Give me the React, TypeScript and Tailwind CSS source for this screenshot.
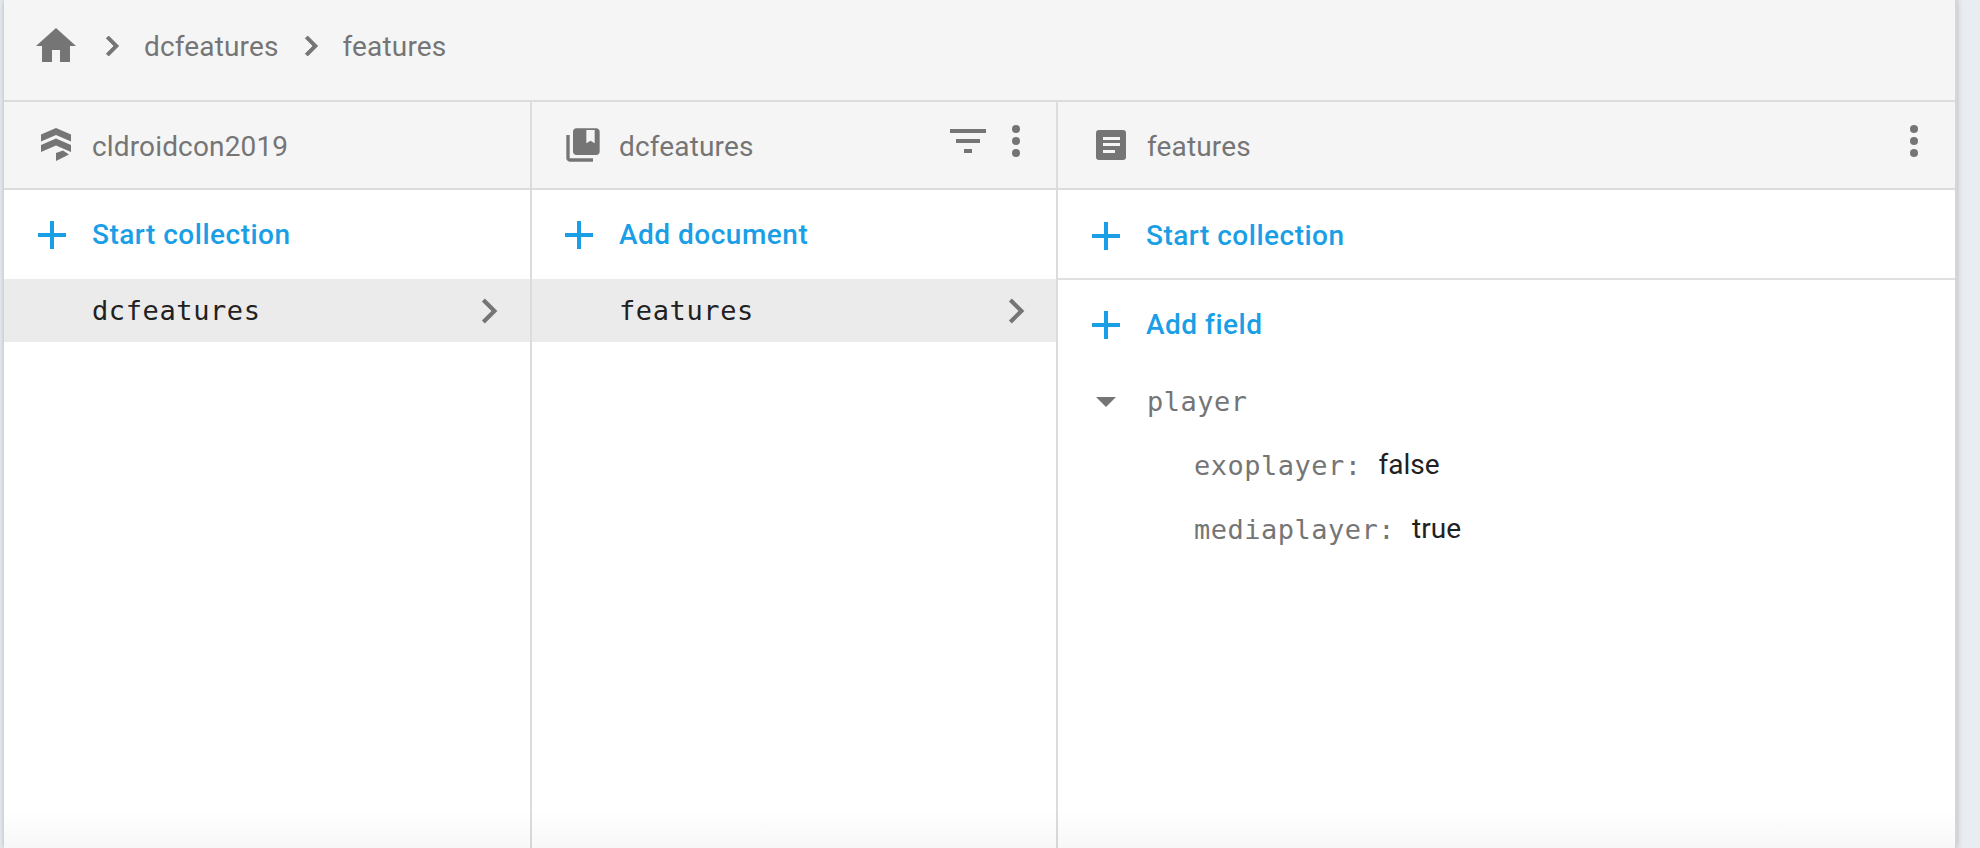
import type { ReactNode } from 'react'

const sans = 'font-["Roboto","Liberation_Sans",sans-serif]'
const mono = 'font-["DejaVu_Sans_Mono","Liberation_Mono",monospace]'

function Icon({ d, className }: { d: string; className: string }) {
  return (
    <svg viewBox="0 0 24 24" className={className} fill="currentColor">
      <path d={d} />
    </svg>
  )
}

const CHEVRON = 'M10 6L8.59 7.41 13.17 12l-4.58 4.59L10 18l6-6z'
const PLUS = 'M13 5h-2v6H5v2h6v6h2v-6h6v-2h-6z'

function HomeIcon() {
  return <Icon d="M10 20v-6h4v6h5v-8h3L12 3 2 12h3v8z" className="w-12 h-12 text-[#757575]" />
}

function DatabaseIcon() {
  return (
    <svg viewBox="0 0 30 34" className="w-[30px] h-[34px] text-[#757575] shrink-0" fill="currentColor">
      <path d="M15 0L30 6.5v7L15 7 0 13.5v-7z" />
      <path d="M15 10.5l15 6.5v7l-15-6.5L0 24v-7z" />
      <path d="M15 25l7-2.5 6 4L15 33z" />
    </svg>
  )
}

function CollectionIcon() {
  return (
    <svg viewBox="0 0 24 24" className="w-10 h-10 text-[#757575] shrink-0" fill="currentColor">
      <path d="M4 6H2v14c0 1.1.9 2 2 2h14v-2H4V6z" />
      <path d="M20 2H8c-1.1 0-2 .9-2 2v12c0 1.1.9 2 2 2h12c1.1 0 2-.9 2-2V4c0-1.1-.9-2-2-2zm-1 9l-2.5-1.5L14 11V3h5v8z" />
    </svg>
  )
}

function DocumentIcon() {
  return (
    <svg viewBox="0 0 30 30" className="w-[30px] h-[30px] text-[#757575] shrink-0" fill="currentColor">
      <path fillRule="evenodd" d="M3 0h24a3 3 0 0 1 3 3v24a3 3 0 0 1-3 3H3a3 3 0 0 1-3-3V3a3 3 0 0 1 3-3zm4 7v3h17V7zm0 6v3h17v-3zm0 7v3h12v-3z" />
    </svg>
  )
}

function FilterIcon() {
  return (
    <svg viewBox="0 0 36 24" className="w-9 h-6 text-[#757575]" fill="currentColor">
      <path d="M0 0h36v4H0zM6 10h24v4H6zM14 20h8v4h-8z" />
    </svg>
  )
}

function Dots() {
  return (
    <svg viewBox="0 0 8 32" className="w-2 h-8 text-[#757575]" fill="currentColor">
      <circle cx="4" cy="4" r="4" />
      <circle cx="4" cy="16" r="4" />
      <circle cx="4" cy="28" r="4" />
    </svg>
  )
}

function ColumnHeader({ icon, title, actions, iconBox }: { icon: ReactNode; title: string; actions?: ReactNode; iconBox: string }) {
  return (
    <div className="h-[88px] shrink-0 bg-[#f5f5f5] border-b-2 border-[#dcdcdc] flex items-center relative">
      <div className={iconBox}>{icon}</div>
      <span className="text-[28px] tracking-[0.15px] text-[#757575] leading-none pt-[4px]">{title}</span>
      {actions}
    </div>
  )
}

function ActionRow({ label, pad, border }: { label: string; pad: string; border?: boolean }) {
  return (
    <div className={`${border ? 'h-[90px] border-b-2 border-[#e0e0e0]' : 'h-[89px]'} shrink-0 flex items-center ${pad}`}>
      <Icon d={PLUS} className="w-12 h-12 text-[#1a9fe6] shrink-0" />
      <span className="text-[28px] font-medium tracking-[0.5px] text-[#1a9fe6] leading-none">{label}</span>
    </div>
  )
}

function SelectedRow({ label, pad }: { label: string; pad: string }) {
  return (
    <div className={`h-[63px] shrink-0 bg-[#ebebeb] flex items-center justify-between ${pad}`}>
      <span className={`${mono} text-[27px] tracking-[0.6px] text-[#212121] leading-none`}>{label}</span>
      <Icon d={CHEVRON} className="w-[50px] h-[50px] text-[#757575]" />
    </div>
  )
}

function Field({ name, value }: { name: string; value: string }) {
  return (
    <div className="h-[64px] pl-[136px] pt-[4px] flex items-center">
      <span className={`${mono} text-[27px] tracking-[0.5px] text-[#757575] leading-none mr-[17px]`}>{name}:</span>
      <span className="text-[28px] text-[#212121] leading-none">{value}</span>
    </div>
  )
}

export default function App() {
  return (
    <div className={`${sans} h-[848px] w-[1980px] overflow-hidden bg-[#e9edf1] pl-[4px]`}>
      <div className="w-[1953px] h-full flex flex-col bg-white border-r-2 border-[#d6d6d6] shadow-[0_0_6px_rgba(0,0,0,0.25)] relative">
        {/* breadcrumbs */}
        <div className="h-[102px] shrink-0 bg-[#f5f5f5] border-b-2 border-[#dcdcdc] flex items-center pl-[28px] pb-[9px] text-[#757575] text-[28px] tracking-[0.15px] leading-none">
          <HomeIcon />
          <Icon d={CHEVRON} className="w-10 h-10 ml-[12px] mr-[12px] stroke-current stroke-[0.5]" />
          <span className="pt-[2px]">dcfeatures</span>
          <Icon d={CHEVRON} className="w-10 h-10 ml-[12px] mr-[12px] stroke-current stroke-[0.5]" />
          <span className="pt-[2px]">features</span>
        </div>

        <div className="flex-1 flex min-h-0">
          {/* project column */}
          <div className="w-[528px] shrink-0 border-r-2 border-[#dcdcdc] flex flex-col">
            <ColumnHeader icon={<DatabaseIcon />} title="cldroidcon2019" iconBox="w-[88px] pl-[37px]" />
            <ActionRow label="Start collection" pad="pl-[24px] gap-[16px]" />
            <SelectedRow label="dcfeatures" pad="pl-[88px] pr-[16px]" />
          </div>

          {/* collection column */}
          <div className="w-[526px] shrink-0 border-r-2 border-[#dcdcdc] flex flex-col">
            <ColumnHeader
              icon={<CollectionIcon />}
              title="dcfeatures"
              iconBox="w-[87px] pl-[31px]"
              actions={
                <div className="ml-auto mr-[36px] flex items-center gap-[26px] pb-[8px]">
                  <FilterIcon />
                  <Dots />
                </div>
              }
            />
            <ActionRow label="Add document" pad="pl-[23px] gap-[16px]" />
            <SelectedRow label="features" pad="pl-[87px] pr-[15px]" />
          </div>

          {/* document column */}
          <div className="flex-1 flex flex-col">
            <ColumnHeader
              icon={<DocumentIcon />}
              title="features"
              iconBox="w-[89px] pl-[38px]"
              actions={
                <div className="ml-auto mr-[37px] flex items-center pb-[8px]">
                  <Dots />
                </div>
              }
            />
            <ActionRow label="Start collection" pad="pl-[24px] gap-[16px] pt-[3px]" border />
            <ActionRow label="Add field" pad="pl-[24px] gap-[16px] pt-[1px]" />
            <div className="h-[62px] pl-[38px] pt-[3px] flex items-center">
              <svg viewBox="0 0 20 10" className="w-5 h-[10px] text-[#757575] shrink-0 mr-[31px]" fill="currentColor">
                <path d="M0 0h20L10 10z" />
              </svg>
              <span className={`${mono} text-[27px] tracking-[0.5px] text-[#757575] leading-none`}>player</span>
            </div>
            <Field name="exoplayer" value="false" />
            <Field name="mediaplayer" value="true" />
          </div>
        </div>

        {/* fade at the bottom edge */}
        <div className="absolute left-0 right-0 bottom-0 h-[40px] bg-gradient-to-b from-transparent to-black/[0.03]" />
      </div>
    </div>
  )
}
